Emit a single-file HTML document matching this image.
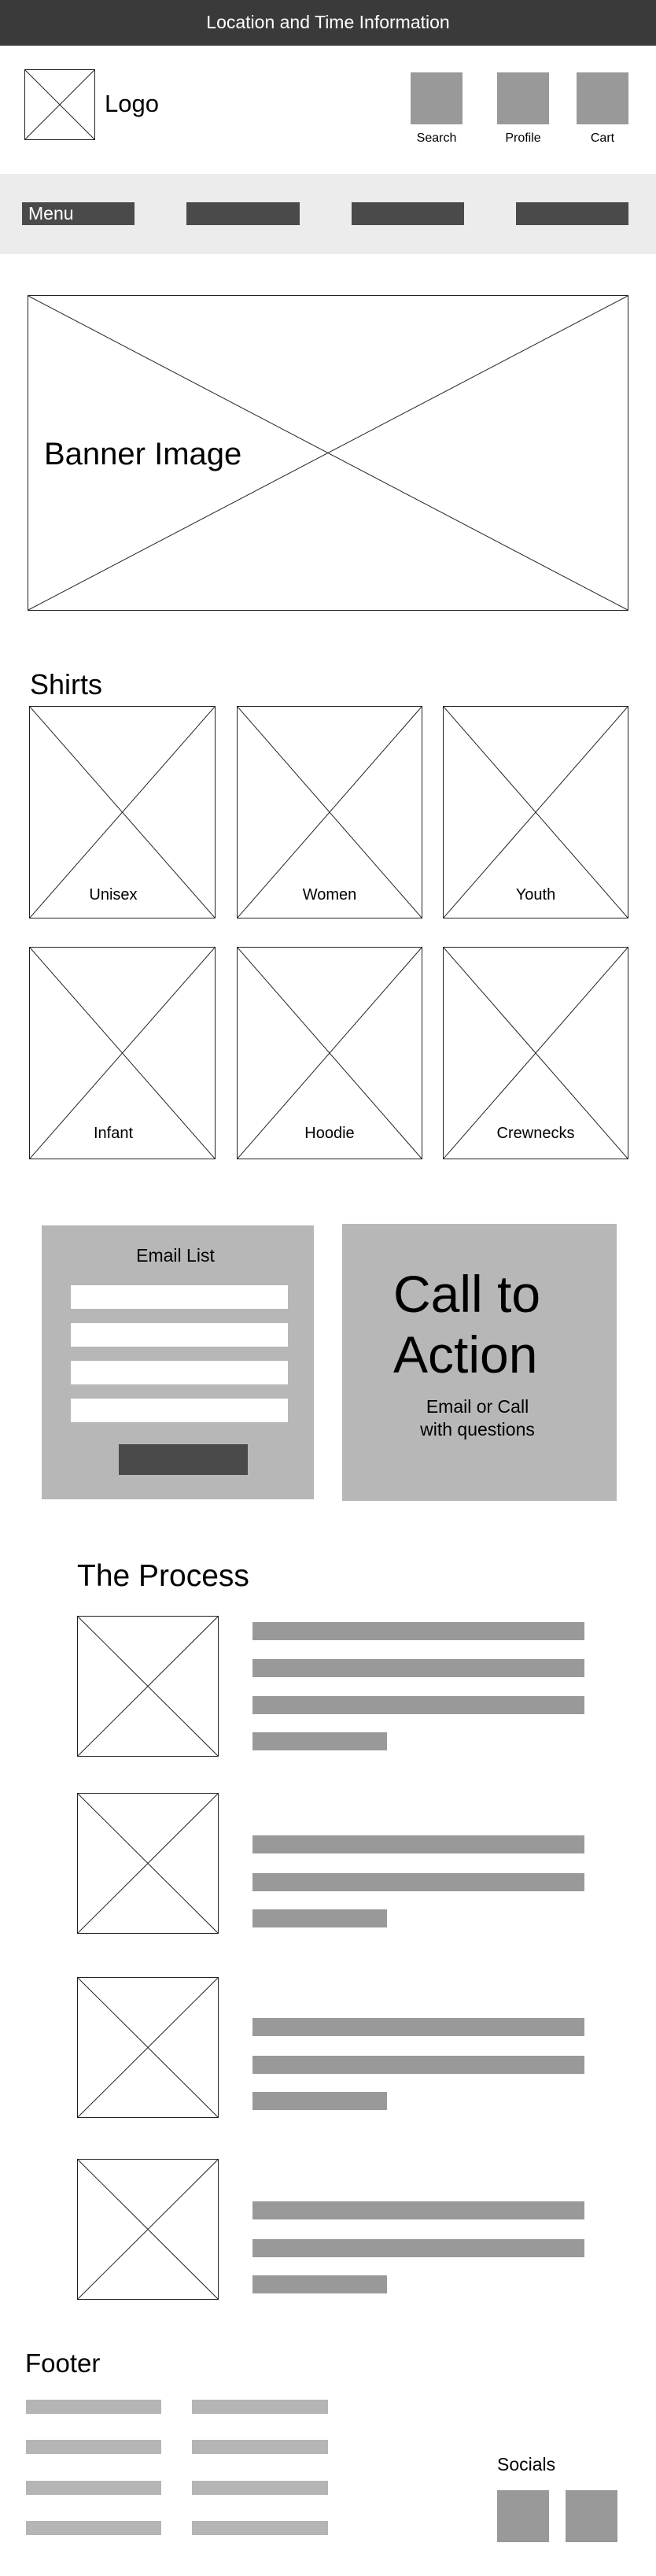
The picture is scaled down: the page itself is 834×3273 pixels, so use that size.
<!DOCTYPE html>
<html><head><meta charset="utf-8"><style>
*{margin:0;padding:0;box-sizing:border-box}
body{width:834px;height:3273px;position:relative;background:#fff;font-family:"Liberation Sans",sans-serif;overflow:hidden}
.a{position:absolute}
.t{position:absolute;white-space:nowrap;line-height:1}
.x{position:absolute;border:1.5px solid #222}
.x svg{position:absolute;left:0;top:0;width:100%;height:100%}
.g{background:#999}
.lg{background:#b5b5b5}
.dk{background:#4a4a4a}
</style></head><body>
<div class="a" style="left:0;top:0;width:834px;height:58px;background:#3a3a3a"></div>
<div class="t" style="left:0;width:834px;top:17px;text-align:center;color:#fff;font-size:23px">Location and Time Information</div>

<div class="x" style="left:31px;top:88px;width:90px;height:90px"><svg viewBox="0 0 100 100" preserveAspectRatio="none"><path d="M0 0L100 100M100 0L0 100" stroke="#222" stroke-width="1" vector-effect="non-scaling-stroke"/></svg></div>
<div class="t" style="left:133px;top:116px;font-size:31px">Logo</div>
<div class="a g" style="left:522px;top:92px;width:66px;height:66px"></div>
<div class="a g" style="left:632px;top:92px;width:66px;height:66px"></div>
<div class="a g" style="left:733px;top:92px;width:66px;height:66px"></div>
<div class="t" style="left:505px;width:100px;text-align:center;top:168px;font-size:16px">Search</div>
<div class="t" style="left:615px;width:100px;text-align:center;top:168px;font-size:16px">Profile</div>
<div class="t" style="left:716px;width:100px;text-align:center;top:168px;font-size:16px">Cart</div>

<div class="a" style="left:0;top:221px;width:834px;height:102px;background:#ececec"></div>
<div class="a dk" style="left:28px;top:257px;width:143px;height:29px"></div>
<div class="t" style="left:36px;top:260px;font-size:23px;color:#fff">Menu</div>
<div class="a dk" style="left:237px;top:257px;width:144px;height:29px"></div>
<div class="a dk" style="left:447px;top:257px;width:143px;height:29px"></div>
<div class="a dk" style="left:656px;top:257px;width:143px;height:29px"></div>

<div class="x" style="left:35px;top:375px;width:764px;height:401px"><svg viewBox="0 0 100 100" preserveAspectRatio="none"><path d="M0 0L100 100M100 0L0 100" stroke="#222" stroke-width="1" vector-effect="non-scaling-stroke"/></svg></div>
<div class="t" style="left:56px;top:557px;font-size:40px">Banner Image</div>

<div class="t" style="left:38px;top:852px;font-size:36px">Shirts</div>
<div class="x" style="left:37px;top:897px;width:237px;height:270px"><svg viewBox="0 0 100 100" preserveAspectRatio="none"><path d="M0 0L100 100M100 0L0 100" stroke="#222" stroke-width="1" vector-effect="non-scaling-stroke"/></svg></div>
<div class="x" style="left:301px;top:897px;width:236px;height:270px"><svg viewBox="0 0 100 100" preserveAspectRatio="none"><path d="M0 0L100 100M100 0L0 100" stroke="#222" stroke-width="1" vector-effect="non-scaling-stroke"/></svg></div>
<div class="x" style="left:563px;top:897px;width:236px;height:270px"><svg viewBox="0 0 100 100" preserveAspectRatio="none"><path d="M0 0L100 100M100 0L0 100" stroke="#222" stroke-width="1" vector-effect="non-scaling-stroke"/></svg></div>
<div class="x" style="left:37px;top:1203px;width:237px;height:270px"><svg viewBox="0 0 100 100" preserveAspectRatio="none"><path d="M0 0L100 100M100 0L0 100" stroke="#222" stroke-width="1" vector-effect="non-scaling-stroke"/></svg></div>
<div class="x" style="left:301px;top:1203px;width:236px;height:270px"><svg viewBox="0 0 100 100" preserveAspectRatio="none"><path d="M0 0L100 100M100 0L0 100" stroke="#222" stroke-width="1" vector-effect="non-scaling-stroke"/></svg></div>
<div class="x" style="left:563px;top:1203px;width:236px;height:270px"><svg viewBox="0 0 100 100" preserveAspectRatio="none"><path d="M0 0L100 100M100 0L0 100" stroke="#222" stroke-width="1" vector-effect="non-scaling-stroke"/></svg></div>
<div class="t" style="left:37px;width:214px;text-align:center;top:1127px;font-size:20px">Unisex</div>
<div class="t" style="left:301px;width:236px;text-align:center;top:1127px;font-size:20px">Women</div>
<div class="t" style="left:563px;width:236px;text-align:center;top:1127px;font-size:20px">Youth</div>
<div class="t" style="left:37px;width:214px;text-align:center;top:1430px;font-size:20px">Infant</div>
<div class="t" style="left:301px;width:236px;text-align:center;top:1430px;font-size:20px">Hoodie</div>
<div class="t" style="left:563px;width:236px;text-align:center;top:1430px;font-size:20px">Crewnecks</div>

<div class="a" style="left:53px;top:1557px;width:346px;height:348px;background:#b7b7b7"></div>
<div class="t" style="left:53px;width:340px;text-align:center;top:1584px;font-size:23px">Email List</div>
<div class="a" style="left:90px;top:1633px;width:276px;height:30px;background:#fff"></div>
<div class="a" style="left:90px;top:1681px;width:276px;height:30px;background:#fff"></div>
<div class="a" style="left:90px;top:1729px;width:276px;height:30px;background:#fff"></div>
<div class="a" style="left:90px;top:1777px;width:276px;height:30px;background:#fff"></div>
<div class="a dk" style="left:151px;top:1835px;width:164px;height:39px"></div>

<div class="a" style="left:435px;top:1555px;width:349px;height:352px;background:#b7b7b7"></div>
<div class="t" style="left:500px;top:1606px;font-size:66px;line-height:77px;white-space:normal;width:280px">Call to Action</div>
<div class="t" style="left:496px;width:222px;text-align:center;top:1773px;font-size:23px;line-height:29px">Email or Call<br>with questions</div>

<div class="t" style="left:98px;top:1983px;font-size:39px">The Process</div>

<div class="x" style="left:98px;top:2053px;width:180px;height:179px"><svg viewBox="0 0 100 100" preserveAspectRatio="none"><path d="M0 0L100 100M100 0L0 100" stroke="#222" stroke-width="1" vector-effect="non-scaling-stroke"/></svg></div>
<div class="a g" style="left:321px;top:2061px;width:422px;height:23px"></div>
<div class="a g" style="left:321px;top:2108px;width:422px;height:23px"></div>
<div class="a g" style="left:321px;top:2155px;width:422px;height:23px"></div>
<div class="a g" style="left:321px;top:2201px;width:171px;height:23px"></div>

<div class="x" style="left:98px;top:2278px;width:180px;height:179px"><svg viewBox="0 0 100 100" preserveAspectRatio="none"><path d="M0 0L100 100M100 0L0 100" stroke="#222" stroke-width="1" vector-effect="non-scaling-stroke"/></svg></div>
<div class="a g" style="left:321px;top:2332px;width:422px;height:23px"></div>
<div class="a g" style="left:321px;top:2380px;width:422px;height:23px"></div>
<div class="a g" style="left:321px;top:2426px;width:171px;height:23px"></div>

<div class="x" style="left:98px;top:2512px;width:180px;height:179px"><svg viewBox="0 0 100 100" preserveAspectRatio="none"><path d="M0 0L100 100M100 0L0 100" stroke="#222" stroke-width="1" vector-effect="non-scaling-stroke"/></svg></div>
<div class="a g" style="left:321px;top:2564px;width:422px;height:23px"></div>
<div class="a g" style="left:321px;top:2612px;width:422px;height:23px"></div>
<div class="a g" style="left:321px;top:2658px;width:171px;height:23px"></div>

<div class="x" style="left:98px;top:2743px;width:180px;height:179px"><svg viewBox="0 0 100 100" preserveAspectRatio="none"><path d="M0 0L100 100M100 0L0 100" stroke="#222" stroke-width="1" vector-effect="non-scaling-stroke"/></svg></div>
<div class="a g" style="left:321px;top:2797px;width:422px;height:23px"></div>
<div class="a g" style="left:321px;top:2845px;width:422px;height:23px"></div>
<div class="a g" style="left:321px;top:2891px;width:171px;height:23px"></div>

<div class="t" style="left:32px;top:2986px;font-size:33px">Footer</div>
<div class="a lg" style="left:33px;top:3049px;width:172px;height:18px"></div>
<div class="a lg" style="left:244px;top:3049px;width:173px;height:18px"></div>
<div class="a lg" style="left:33px;top:3100px;width:172px;height:18px"></div>
<div class="a lg" style="left:244px;top:3100px;width:173px;height:18px"></div>
<div class="a lg" style="left:33px;top:3152px;width:172px;height:18px"></div>
<div class="a lg" style="left:244px;top:3152px;width:173px;height:18px"></div>
<div class="a lg" style="left:33px;top:3203px;width:172px;height:18px"></div>
<div class="a lg" style="left:244px;top:3203px;width:173px;height:18px"></div>
<div class="t" style="left:632px;top:3120px;font-size:23px">Socials</div>
<div class="a g" style="left:632px;top:3164px;width:66px;height:66px"></div>
<div class="a g" style="left:719px;top:3164px;width:66px;height:66px"></div>
</body></html>
